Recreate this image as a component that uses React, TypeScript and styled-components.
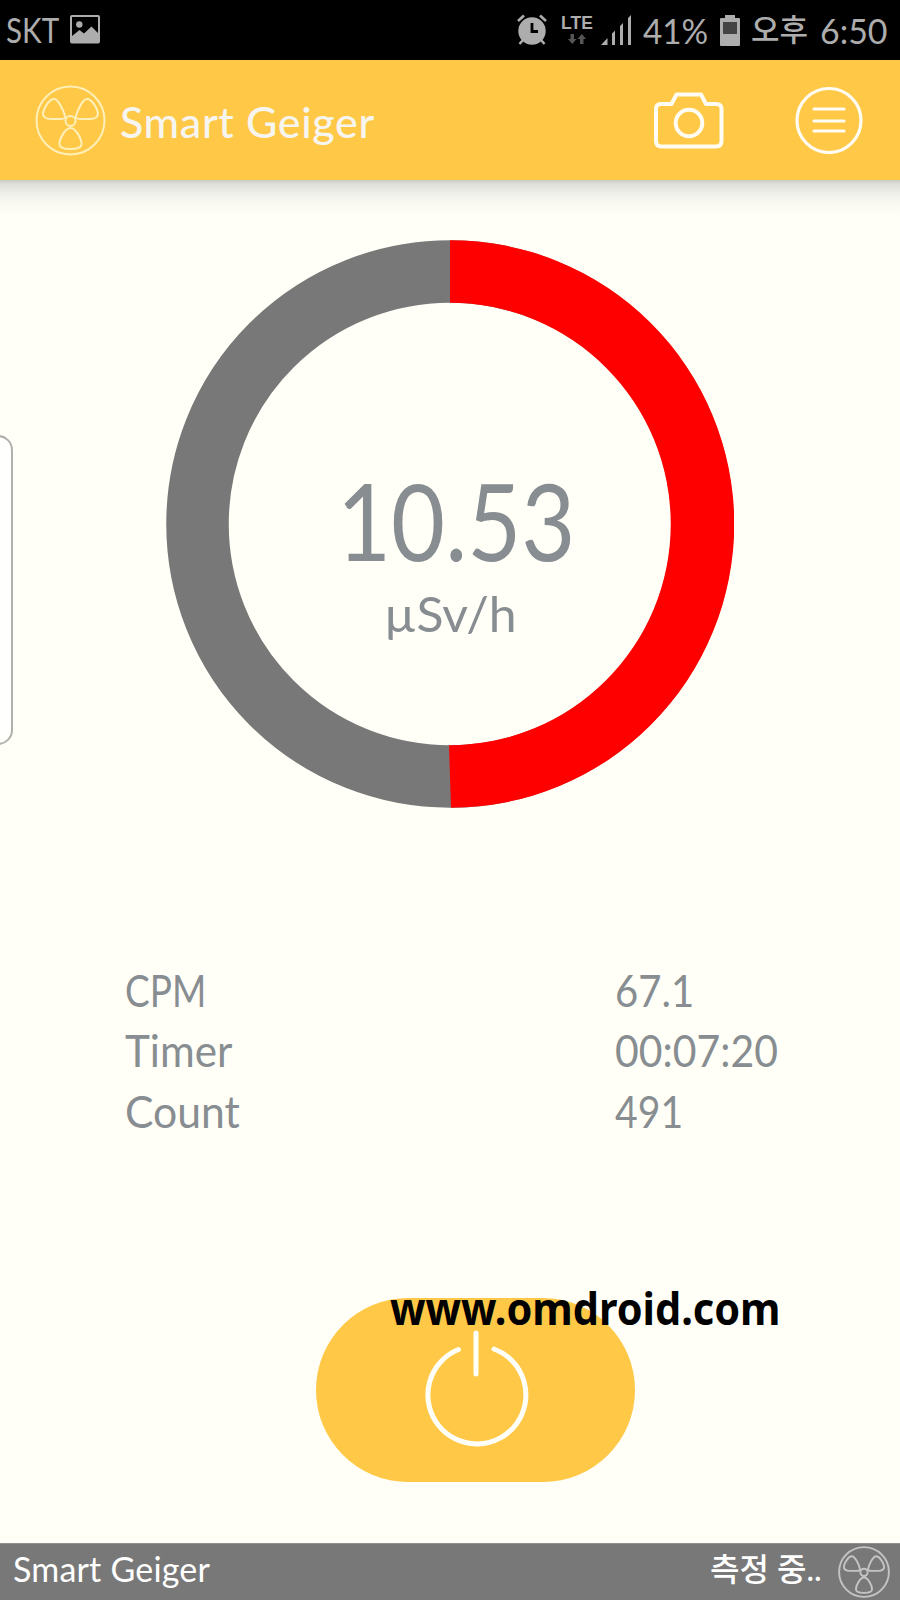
import React from 'react';
import styled, { createGlobalStyle } from 'styled-components';

const GlobalStyle = createGlobalStyle`
  * { box-sizing: border-box; }
  body { margin: 0; background: #fffff8; }
  svg { display: block; flex: none; }
`;

const latin = `Lato, 'Noto Sans CJK KR', sans-serif`;

const Screen = styled.div`
  position: relative;
  width: 900px;
  height: 1600px;
  overflow: hidden;
  display: flex;
  flex-direction: column;
  background: #fffff8;
  font-family: ${latin};
`;

interface LabelProps {
  $size: number;
  $width?: number;
  $stretch?: number;
  $spacing?: number;
  $weight?: number;
  $leading?: number;
}

const Label = styled.span<LabelProps>`
  display: block;
  flex: none;
  width: ${p => (p.$width ? `${p.$width}px` : 'auto')};
  font-size: ${p => p.$size}px;
  font-weight: ${p => p.$weight ?? 400};
  letter-spacing: ${p => p.$spacing ?? 0}px;
  line-height: ${p => p.$leading ?? 1.2};
  white-space: nowrap;
  transform: scaleX(${p => p.$stretch ?? 1});
  transform-origin: left center;
`;

const StatusBar = styled.div`
  height: 60px;
  flex: none;
  display: flex;
  align-items: center;
  justify-content: space-between;
  padding: 0 10px 0 6px;
  background: #000;
  color: #adadad;
`;

const StatusGroup = styled.div`
  display: flex;
  align-items: center;
`;

const Battery = styled.div`
  margin-right: 11px;
`;

const Signal = styled.div`
  margin-right: 11px;
`;

const Network = styled.div`
  width: 34px;
  margin: 0 7px 0 13px;
  display: flex;
  flex-direction: column;
  align-items: center;
  gap: 3px;
  font: 700 17.5px/15px 'Liberation Sans', sans-serif;
`;

const Header = styled.header`
  height: 120px;
  flex: none;
  display: flex;
  align-items: center;
  padding: 0 37px 0 35px;
  background: #ffc847;
  color: #f6f5f0;
`;

const HeaderTitle = styled.div`
  flex: 1;
  padding: 4px 0 0 14px;
`;

const HeaderActions = styled.div`
  display: flex;
  align-items: center;
  gap: 71px;
`;

const IconButton = styled.button`
  padding: 0;
  border: 0;
  background: none;
  color: #fffdf3;
`;

const Main = styled.main`
  flex: 1;
  display: flex;
  flex-direction: column;
  background: linear-gradient(#cbcbc6 0, #dfdfda 4px, #efefe9 13px, #f9f9f2 23px, #fffff8 36px);
`;

const Gauge = styled.section`
  width: 568px;
  height: 568px;
  margin: 60px auto 0;
  display: grid;
  > * { grid-area: 1 / 1; }
`;

const Reading = styled.div`
  display: flex;
  flex-direction: column;
  padding: 227px 0 0 171px;
  color: #878d90;
`;

const Unit = styled.div`
  padding-left: 47px;
  margin-top: 11px;
`;

const Stats = styled.dl`
  margin: 152px 0 0;
  padding-left: 125px;
  display: grid;
  grid-template-columns: 490px 1fr;
  grid-auto-rows: 60.5px;
  align-items: center;
  color: #878d90;
`;

const StatName = styled.dt``;
const StatValue = styled.dd`
  margin: 0;
`;

const PowerButton = styled.button`
  width: 319px;
  height: 184px;
  margin: 156px 0 0 316px;
  padding: 0 0 6px;
  border: 0;
  border-radius: 92px;
  display: flex;
  justify-content: center;
  align-items: center;
  background: #ffc847;
`;

const Watermark = styled.div`
  position: absolute;
  left: 390px;
  top: 1282px;
  color: #000;
  font-family: 'Noto Sans', sans-serif;
`;

const EdgeHandle = styled.div`
  position: absolute;
  left: -20px;
  top: 435px;
  width: 33px;
  height: 310px;
  border: 2px solid #b0b1ad;
  border-radius: 15px;
  background: #fffffd;
`;

const Footer = styled.footer`
  height: 57px;
  flex: none;
  display: flex;
  align-items: center;
  justify-content: space-between;
  padding: 0 10px 0 13px;
  border-top: 1px solid #909090;
  background: #787878;
  color: #fff;
`;

const FooterText = styled.div`
  padding-bottom: 6px;
`;

const FooterState = styled.div`
  display: flex;
  align-items: center;
`;

const blade = 'M30 31 C28 24 23 14 19 14 C14 14 9 23 8 28 C8 33 11 34 16 34 L25 34 C29 34 31 33 30 31 Z';

const Radiation = ({ size, color, width }: { size: number; color: string; width: number }) => (
  <svg width={size} height={size} viewBox="0 0 71 71" fill="none" stroke={color} strokeWidth={width}>
    <circle cx="35.5" cy="35.5" r="34" />
    <circle cx="35.5" cy="36" r="5" />
    <path d={blade} />
    <path d={blade} transform="matrix(-1 0 0 1 71 0)" />
    <path d="M35.5 43 C30 43 24.500 54 24.500 59 C24.500 63 31 64 35.500 64 C40 64 46.500 63 46.500 59 C46.500 54 41 43 35.500 43 Z" />
  </svg>
);

const PictureIcon = () => (
  <svg width="30" height="29" viewBox="0 0 30 29">
    <rect x="1" y="1" width="28" height="26.500" rx="1" fill="none" stroke="#adadad" strokeWidth="2" />
    <circle cx="9.300" cy="9.500" r="3.200" fill="#adadad" />
    <path d="M2 21 L9.500 15 L14 18.500 L21.500 11.500 L28.500 18.500 V27.500 H2Z" fill="#adadad" />
  </svg>
);

const AlarmIcon = () => (
  <svg width="30" height="32" viewBox="0 0 30 32" fill="none" stroke="#adadad">
    <circle cx="15" cy="17" r="13.700" fill="#adadad" stroke="none" />
    <path d="M1 7 L7 1.500 M29 7 L23 1.500" strokeWidth="2.600" />
    <path d="M6 26 L2.500 30 M24 26 L27.500 30" strokeWidth="2.600" />
    <path d="M15 9 V17.500 H21" stroke="#000" strokeWidth="2.800" />
  </svg>
);

const SignalIcon = () => (
  <svg width="31" height="30" viewBox="0 0 31 30" fill="#adadad">
    <path d="M0 30 L6.500 23 V30Z M11 18.500 L14 15.500 V30 H11Z M19 11 L22 8 V30 H19Z M27 3 L30 0 V30 H27Z" />
  </svg>
);

const BatteryIcon = () => (
  <svg width="20" height="31" viewBox="0 0 20 31">
    <path d="M5 0 H15 V3 H19 Q20 3 20 4 V30 Q20 31 19 31 H1 Q0 31 0 30 V4 Q0 3 1 3 H5Z" fill="#adadad" />
    <rect x="3" y="7" width="14" height="12" fill="#444" />
  </svg>
);

const DataArrows = () => (
  <svg width="18" height="10" viewBox="0 0 18 10" fill="#555">
    <path d="M2.500 0 H6 V5 H8.500 L4.300 10 L0 5 H2.500Z M12 10 H15.500 V5 H18 L13.800 0 L9.500 5 H12Z" />
  </svg>
);

const CameraIcon = () => (
  <svg width="70" height="57" viewBox="0 0 70 57" fill="none" stroke="currentColor" strokeWidth="4">
    <path d="M7 12 H17.500 L22.500 2.500 H47 L52 12 H62 Q67.500 12 67.500 17 V49 Q67.500 54.500 62 54.500 H7.500 Q2 54.500 2 49 V17 Q2 12 7 12Z" strokeLinejoin="round" />
    <circle cx="35" cy="31" r="13.300" />
  </svg>
);

const MenuIcon = () => (
  <svg width="68" height="68" viewBox="0 0 68 68" fill="none" stroke="currentColor" strokeWidth="3.200" strokeLinecap="round">
    <circle cx="34" cy="34.500" r="32" />
    <path d="M19 23 H49 M19 35 H49 M19 45 H49" />
  </svg>
);

const Ring = () => (
  <svg width="568" height="568" viewBox="0 0 568 568">
    <circle cx="284" cy="284" r="252.500" fill="none" stroke="#787878" strokeWidth="62.500" />
    <path d="M284 0.250 A283.750 283.750 0 0 1 285 567.750 L283 505.250 A221.250 221.250 0 1 0 284 62.750Z" fill="#f00" />
  </svg>
);

const PowerIcon = () => (
  <svg width="110" height="120" viewBox="0 0 110 120" fill="none" stroke="#fffffa" strokeWidth="5" strokeLinecap="round">
    <path d="M55 6 V47 M37.500 22.500 A49 49 0 1 0 73 22" />
  </svg>
);

const stats = [
  { name: 'CPM', value: '67.1', nameStretch: 0.84, valueStretch: 0.91 },
  { name: 'Timer', value: '00:07:20', nameStretch: 0.96, valueStretch: 0.93 },
  { name: 'Count', value: '491', nameStretch: 0.97, valueStretch: 0.89 },
];

export default function App() {
  return (
    <Screen>
      <GlobalStyle />
      <StatusBar>
        <StatusGroup>
          <Label $size={34} $width={64} $stretch={0.87}>SKT</Label>
          <PictureIcon />
        </StatusGroup>
        <StatusGroup>
          <AlarmIcon />
          <Network>
            LTE
            <DataArrows />
          </Network>
          <Signal><SignalIcon /></Signal>
          <Label $size={35} $width={77} $stretch={0.95}>41%</Label>
          <Battery><BatteryIcon /></Battery>
          <Label $size={31} $width={69} $weight={500}>오후</Label>
          <Label $size={35} $width={70} $stretch={0.97}>6:50</Label>
        </StatusGroup>
      </StatusBar>
      <Header>
        <Radiation size={71} color="#ffefb8" width={2} />
        <HeaderTitle>
          <Label $size={43} $weight={500} $spacing={0.65}>Smart Geiger</Label>
        </HeaderTitle>
        <HeaderActions>
          <IconButton aria-label="Camera"><CameraIcon /></IconButton>
          <IconButton aria-label="Menu"><MenuIcon /></IconButton>
        </HeaderActions>
      </Header>
      <Main>
        <Gauge>
          <Ring />
          <Reading>
            <Label $size={106} $stretch={0.88} $leading={1}>10.53</Label>
            <Unit>
              <Label $size={49} $stretch={1.02}>µSv/h</Label>
            </Unit>
          </Reading>
        </Gauge>
        <Stats>
          {stats.map(s => (
            <React.Fragment key={s.name}>
              <StatName><Label $size={44} $stretch={s.nameStretch}>{s.name}</Label></StatName>
              <StatValue><Label $size={44} $stretch={s.valueStretch}>{s.value}</Label></StatValue>
            </React.Fragment>
          ))}
        </Stats>
        <PowerButton aria-label="Power"><PowerIcon /></PowerButton>
      </Main>
      <Footer>
        <FooterText>
          <Label $size={34} $spacing={0.2}>Smart Geiger</Label>
        </FooterText>
        <FooterState>
          <FooterText>
            <Label $size={32} $width={128} $weight={500}>측정 중..</Label>
          </FooterText>
          <Radiation size={52} color="#c4c4c4" width={2.6} />
        </FooterState>
      </Footer>
      <EdgeHandle />
      <Watermark>
        <Label $size={44} $weight={700} $stretch={0.942}>www.omdroid.com</Label>
      </Watermark>
    </Screen>
  );
}
